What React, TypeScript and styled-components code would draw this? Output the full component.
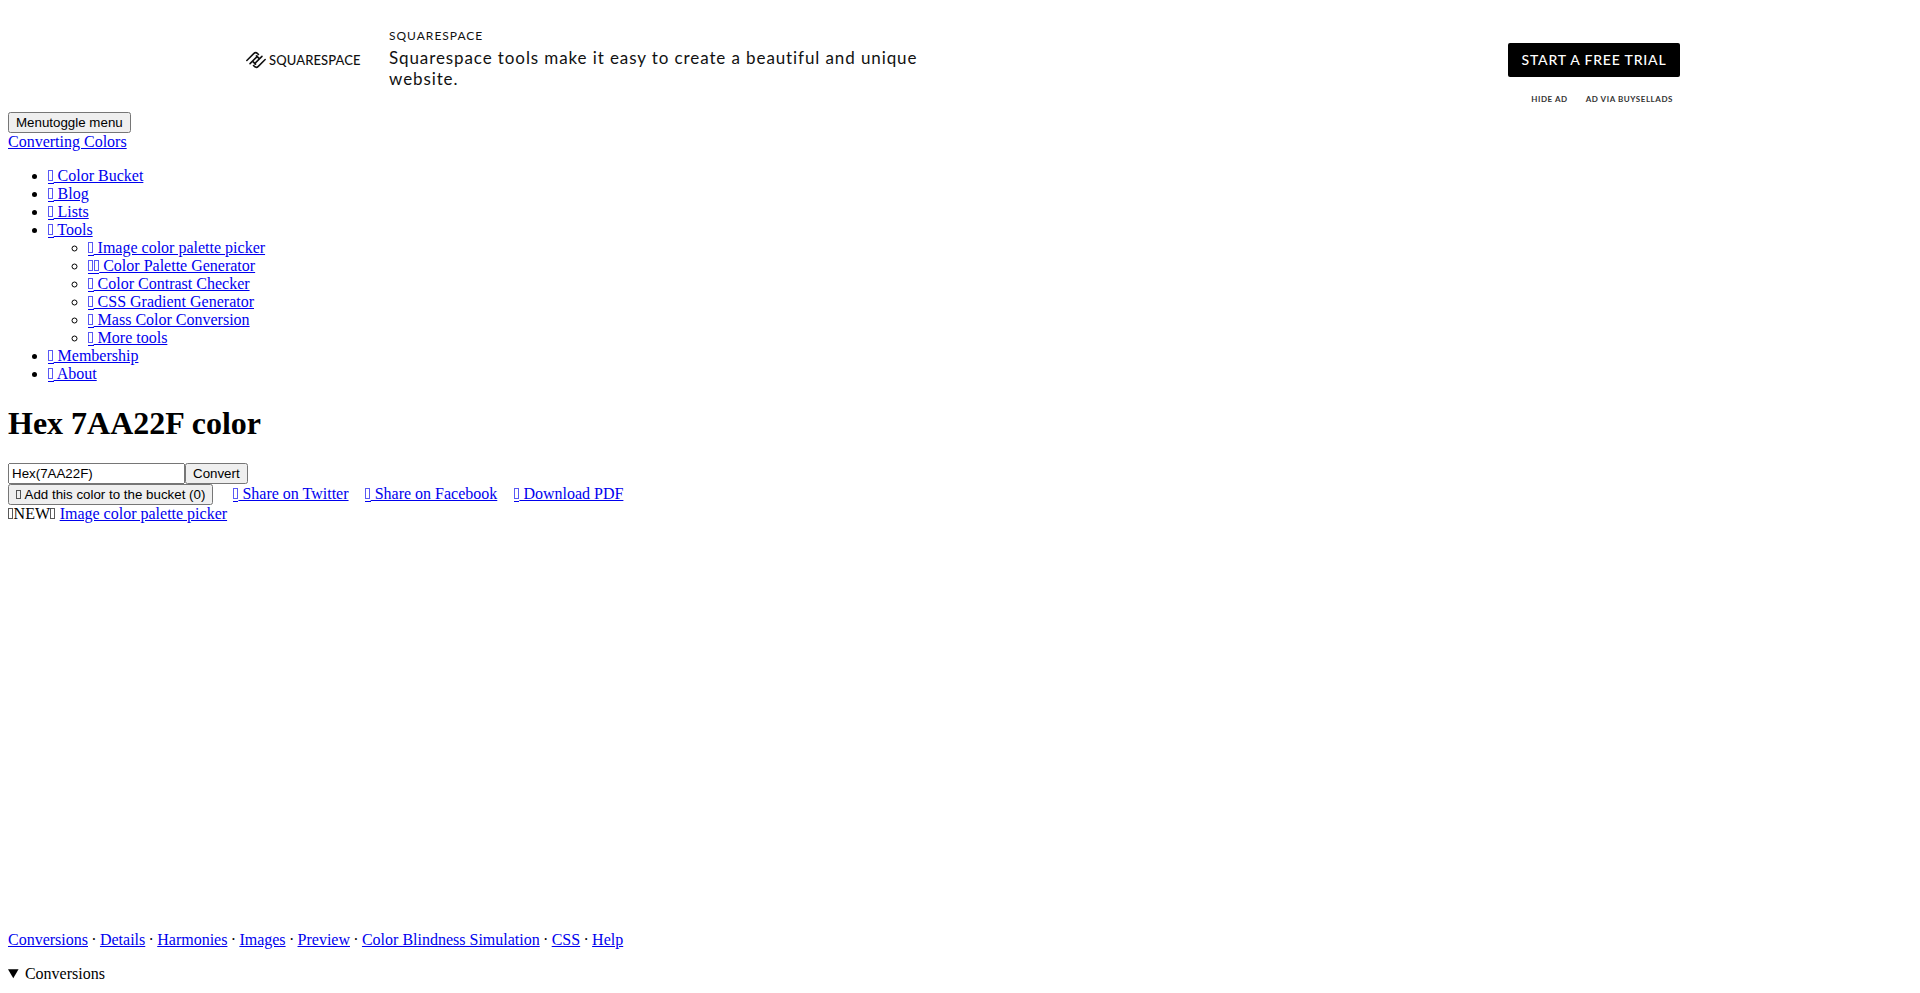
import React from 'react'
import styled, { createGlobalStyle } from 'styled-components'

const GlobalStyle = createGlobalStyle`
    body {
        margin: 8px;
        font-family: 'Liberation Serif', serif;
        font-size: 16px;
        color: #000;
        background: #fff;
    }
`

const Ad = styled.div`
    height: 104px;
    box-sizing: border-box;
    padding: 0 232px 0 232px;
    display: flex;
    flex-direction: column;
    font-family: Lato, sans-serif;
    color: #111;
`

const AdMain = styled.div`
    display: flex;
    align-items: center;
    margin-top: 20px;
`

const AdLogo = styled.div`
    display: flex;
    align-items: center;
    gap: 2px;
    width: 149px;
    padding: 2px 0 0 5px;
    box-sizing: border-box;
    font-size: 13px;
    font-weight: 500;
    letter-spacing: 0.1px;
`

const AdCopy = styled.div`
    width: 540px;
    flex: none;
`

const AdCompany = styled.div`
    font-size: 12px;
    line-height: 15px;
    letter-spacing: 1px;
    margin-bottom: 4px;
`

const AdText = styled.div`
    font-size: 17px;
    line-height: 21px;
    letter-spacing: 0.9px;
`

const AdButton = styled.a`
    margin-left: auto;
    margin-top: 3px;
    width: 172px;
    height: 34px;
    box-sizing: border-box;
    padding-bottom: 2px;
    display: flex;
    align-items: center;
    justify-content: center;
    background: #000;
    color: #fff;
    border-radius: 2px;
    font-size: 14px;
    font-weight: 500;
    letter-spacing: 0.8px;
`

const AdFooter = styled.div`
    display: flex;
    justify-content: flex-end;
    gap: 18px;
    padding-right: 7px;
    margin-top: 3px;
    font-size: 8px;
    font-weight: 700;
    line-height: 14px;
    letter-spacing: 0.55px;
    color: #333;
`

const FormButton = styled.button`
    font-family: 'Liberation Sans', sans-serif;
    font-size: 13.3333px;
`

const BucketButton = styled(FormButton)`
    margin-right: 3px;
`

const ColorInput = styled.input`
    box-sizing: border-box;
    width: 177px;
    font-family: 'Liberation Sans', sans-serif;
    font-size: 13.3333px;
`

const Heading = styled.h1`
    margin: 22px 0 21px;
`

const ShareLink = styled.a`
    margin-left: 12.5px;
`

const ColorBlock = styled.div`
    height: 408px;
`

const SectionNav = styled.p`
    margin: 0 0 16px;
`

const Dot = styled.span`
    margin: 0 -0.7px;
`

const Summary = styled.summary`
    cursor: pointer;
`

// missing-glyph box, the icon font of the original page never loaded
const Tofu = styled.span`
    display: inline-block;
    position: relative;
    box-sizing: border-box;
    width: 5px;
    height: 0.7em;
    margin-right: 0.6px;
    border: 1px solid color-mix(in srgb, currentColor 65%, transparent);

    a &::after {
        content: '';
        position: absolute;
        left: -1px;
        right: -1.6px;
        bottom: -4px;
        height: 1px;
        background: currentColor;
    }
`

const LogoMark = () => (
    <svg width="22" height="22" viewBox="0 0 24 24" fill="none" stroke="#111" strokeWidth="1.7" strokeLinecap="round">
        <path d="M2 12.5 L9.5 5 a3 3 0 0 1 4.2 0 l1 1 M5.5 16 L13.5 8 M11.5 16.5 L8.5 13.5" />
        <path d="M22 11.5 L14.5 19 a3 3 0 0 1 -4.2 0 l-1 -1 M18.5 8 L10.5 16 M12.5 7.5 L15.5 10.5" />
    </svg>
)

const App: React.FunctionComponent = () => (
    <>
        <GlobalStyle />
        <Ad>
            <AdMain>
                <AdLogo>
                    <LogoMark />
                    SQUARESPACE
                </AdLogo>
                <AdCopy>
                    <AdCompany>SQUARESPACE</AdCompany>
                    <AdText>Squarespace tools make it easy to create a beautiful and unique website.</AdText>
                </AdCopy>
                <AdButton>START A FREE TRIAL</AdButton>
            </AdMain>
            <AdFooter>
                <span>HIDE AD</span>
                <span>AD VIA BUYSELLADS</span>
            </AdFooter>
        </Ad>
        <FormButton>Menu<span>toggle menu</span></FormButton>
        <div>
            <a href="#">Converting Colors</a>
        </div>
        <ul>
            <li><a href="#"><Tofu /> Color Bucket</a></li>
            <li><a href="#"><Tofu /> Blog</a></li>
            <li><a href="#"><Tofu /> Lists</a></li>
            <li>
                <a href="#"><Tofu /> Tools</a>
                <ul>
                    <li><a href="#"><Tofu /> Image color palette picker</a></li>
                    <li><a href="#"><Tofu /><Tofu /> Color Palette Generator</a></li>
                    <li><a href="#"><Tofu /> Color Contrast Checker</a></li>
                    <li><a href="#"><Tofu /> CSS Gradient Generator</a></li>
                    <li><a href="#"><Tofu /> Mass Color Conversion</a></li>
                    <li><a href="#"><Tofu /> More tools</a></li>
                </ul>
            </li>
            <li><a href="#"><Tofu /> Membership</a></li>
            <li><a href="#"><Tofu /> About</a></li>
        </ul>
        <Heading>Hex 7AA22F color</Heading>
        <form>
            <ColorInput type="text" defaultValue="Hex(7AA22F)" />
            <FormButton type="button">Convert</FormButton>
        </form>
        <div>
            <BucketButton><Tofu /> Add this color to the bucket (0)</BucketButton>
            {' '}
            <ShareLink href="#"><Tofu /> Share on Twitter</ShareLink>
            {' '}
            <ShareLink href="#"><Tofu /> Share on Facebook</ShareLink>
            {' '}
            <ShareLink href="#"><Tofu /> Download PDF</ShareLink>
        </div>
        <div>
            <Tofu />NEW<Tofu /> <a href="#">Image color palette picker</a>
        </div>
        <ColorBlock />
        <SectionNav>
            <a href="#">Conversions</a> <Dot>·</Dot> <a href="#">Details</a> <Dot>·</Dot> <a href="#">Harmonies</a> <Dot>·</Dot> <a href="#">Images</a> <Dot>·</Dot> <a href="#">Preview</a> <Dot>·</Dot> <a href="#">Color Blindness Simulation</a> <Dot>·</Dot> <a href="#">CSS</a> <Dot>·</Dot> <a href="#">Help</a>
        </SectionNav>
        <details open>
            <Summary>Conversions</Summary>
        </details>
    </>
)

export default App
